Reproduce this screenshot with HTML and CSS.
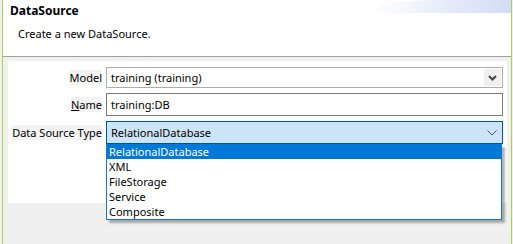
FILE: index.html
```html
<!DOCTYPE html>
<html lang="en">
<head>
  <meta charset="UTF-8">
  <title>DataSource</title>
  <link rel="stylesheet" href="styles.css">
</head>
<body>

<div class="frame">
  <header class="banner">
    <div class="swoosh"></div>
    <h1>DataSource</h1>
    <p>Create a new DataSource.</p>
  </header>

  <div class="body">
    <div class="panel">
      <div class="form">
        <label class="lbl">Model</label>
        <div class="select plain">
          <span>training (training)</span>
          <span class="btn">
            <svg width="9" height="6" viewBox="0 0 9 6"><path d="M1 1 L4.5 4.5 L8 1" fill="none" stroke="#444" stroke-width="2"/></svg>
          </span>
        </div>

        <label class="lbl"><u>N</u>ame</label>
        <div class="input">training:DB</div>

        <label class="lbl">Data Source Type</label>
        <div class="combo">
          <div class="select open">
            <span>RelationalDatabase</span>
            <svg width="10" height="6" viewBox="0 0 10 6"><path d="M0.5 0.5 L5 5 L9.5 0.5" fill="none" stroke="#555" stroke-width="1"/></svg>
          </div>
          <ul class="list">
            <li class="on">RelationalDatabase</li>
            <li>XML</li>
            <li>FileStorage</li>
            <li>Service</li>
            <li>Composite</li>
          </ul>
        </div>
      </div>
    </div>
  </div>
</div>

</body>
</html>
```

FILE: styles.css
```css
body {
  margin: 0;
  background: #f0f0f0;
  font-family: 'Noto Sans', sans-serif;
  font-size: 11px;
  color: #000;
}

.frame {
  margin-left: 2px;
  width: 508px;
  height: 244px;
  border-left: 1px solid #a8d14f;
  border-right: 1px solid #a8d14f;
  display: flex;
  flex-direction: column;
}

.banner {
  position: relative;
  background: #fff;
  height: 57px;
  border-bottom: 1px solid #a0a0a0;
  padding: 0 0 0 7px;
  box-sizing: border-box;
}

.swoosh {
  position: absolute;
  top: 0;
  right: 0;
  width: 140px;
  height: 13px;
  border-top-left-radius: 70px 13px;
  background: linear-gradient(90deg, #ffffff, #e8edfa 50%, #d3dcf5);
}

.banner h1 {
  position: relative;
  margin: 0;
  padding-top: 3px;
  font-size: 12px;
  font-weight: bold;
  line-height: 16px;
}

.banner p {
  margin: 7px 0 0 8px;
  line-height: 16px;
}

.body {
  flex: 1;
  padding: 4px 4px 0 5px;
}

.panel {
  background: #fff;
  height: 142px;
}

.form {
  display: grid;
  grid-template-columns: 94px 397px;
  column-gap: 4px;
  row-gap: 5px;
  padding-top: 6px;
  align-items: center;
}

.lbl {
  justify-self: end;
  white-space: nowrap;
  background: #f3f3f3;
  line-height: 15px;
}

.select, .input {
  box-sizing: border-box;
  display: flex;
  align-items: center;
  justify-content: space-between;
  padding-left: 4px;
}

.select.plain {
  height: 21px;
  border: 1px solid #adadad;
  padding-right: 1px;
}

.btn {
  width: 17px;
  height: 17px;
  background: #f0f0f0;
  display: flex;
  align-items: center;
  justify-content: center;
}

.input {
  height: 23px;
  border: 1px solid #7a7a7a;
}

.combo {
  position: relative;
}

.select.open {
  height: 23px;
  background: #cce4f7;
  border: 1px solid #005499;
  padding-right: 5px;
}

.list {
  position: absolute;
  left: 0;
  top: 23px;
  width: 396px;
  margin: 0;
  padding: 0;
  list-style: none;
  background: #fff;
  border: 1px solid #1a75cf;
  border-top: none;
  box-sizing: border-box;
  box-shadow: 3px 3px 2px rgba(0, 0, 0, 0.3);
}

.list li {
  height: 15px;
  line-height: 15px;
  padding-left: 2px;
}

.list li.on {
  background: #0078d7;
  color: #fff;
}
```
